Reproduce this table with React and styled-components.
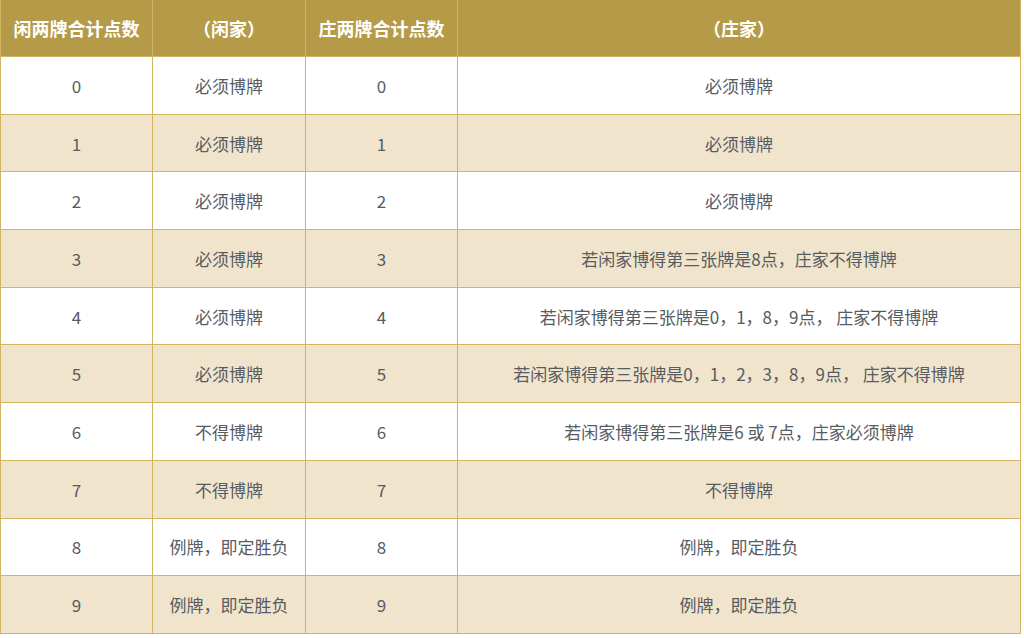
import { createGlobalStyle } from "styled-components";
import styled from "styled-components";

const GlobalStyle = createGlobalStyle`
  body {
    margin: 0;
    background: #ffffff;
    font-family: "Noto Sans CJK SC", sans-serif;
  }
`

const Table = styled.table`
  width: 1021px;
  border-collapse: collapse;
  table-layout: fixed;
  border-left: 1px solid #d3b462;
  border-right: 1px solid #d3b462;
  border-bottom: 1px solid #d3b462;
`

const HeadCell = styled.th`
  height: 56px;
  padding: 0;
  background: #b59b47;
  color: #ffffff;
  font-size: 18px;
  font-weight: 700;
  font-family: "Noto Sans CJK SC", sans-serif;
  text-align: center;
  border-left: 1px solid #cdb466;
  border-bottom: 1px solid #d3b462;
  &:first-child {
    border-left: none;
  }
`

const Row = styled.tr`
  background: ${(p) => (p.$odd ? "#f1e4cc" : "#ffffff")};
`

const Cell = styled.td`
  height: 56.7px;
  padding: 0;
  text-align: center;
  color: #575b62;
  font-size: 17px;
  font-family: "Noto Sans CJK SC", sans-serif;
  border: 1px solid #d3b462;
  border-top: none;
`

const rows = [
  ["必须博牌", "必须博牌"],
  ["必须博牌", "必须博牌"],
  ["必须博牌", "必须博牌"],
  ["必须博牌", "若闲家博得第三张牌是8点，庄家不得博牌"],
  ["必须博牌", "若闲家博得第三张牌是0，1，8，9点， 庄家不得博牌"],
  ["必须博牌", "若闲家博得第三张牌是0，1，2，3，8，9点， 庄家不得博牌"],
  ["不得博牌", "若闲家博得第三张牌是6 或 7点，庄家必须博牌"],
  ["不得博牌", "不得博牌"],
  ["例牌，即定胜负", "例牌，即定胜负"],
  ["例牌，即定胜负", "例牌，即定胜负"],
];

const App = () => {
  return (
    <>
      <GlobalStyle />
      <Table>
        <colgroup>
          <col style={{ width: 152 }} />
          <col style={{ width: 153 }} />
          <col style={{ width: 152 }} />
          <col />
        </colgroup>
        <thead>
          <tr>
            <HeadCell>闲两牌合计点数</HeadCell>
            <HeadCell>（闲家）</HeadCell>
            <HeadCell>庄两牌合计点数</HeadCell>
            <HeadCell>（庄家）</HeadCell>
          </tr>
        </thead>
        <tbody>
          {rows.map((r, i) => (
            <Row key={i} $odd={i % 2 === 1}>
              <Cell>{i}</Cell>
              <Cell>{r[0]}</Cell>
              <Cell>{i}</Cell>
              <Cell>{r[1]}</Cell>
            </Row>
          ))}
        </tbody>
      </Table>
    </>
  );
}

export default App;
